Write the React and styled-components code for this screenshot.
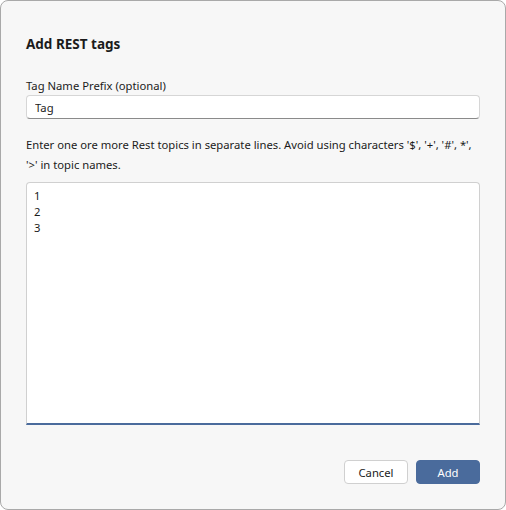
import React, { useState } from "react";
import styled, { createGlobalStyle } from "styled-components";

const GlobalStyle = createGlobalStyle`
    html, body {
        margin: 0;
        padding: 0;
        background: #ffffff;
    }
    * {
        box-sizing: border-box;
    }
`

function App() {
    const [prefix, setPrefix] = useState("Tag");
    const [topics, setTopics] = useState("1\n2\n3");

    return (
        <>
            <GlobalStyle />
            <Dialog>
                <Title>Add REST tags</Title>
                <Field>
                    <Label>Tag Name Prefix (optional)</Label>
                    <Input value={prefix} onChange={(e) => setPrefix(e.target.value)} />
                </Field>
                <Hint>
                    Enter one ore more Rest topics in separate lines. Avoid using characters '$', '+', '#', *', '&gt;' in topic names.
                </Hint>
                <TopicArea value={topics} onChange={(e) => setTopics(e.target.value)} />
                <Footer>
                    <Button>Cancel</Button>
                    <Button primary>Add</Button>
                </Footer>
            </Dialog>
        </>
    )
}

export default App;


const Dialog = styled.div`
    width: 506px;
    height: 510px;
    display: flex;
    flex-direction: column;
    padding: 34px 25px 25px 25px;
    background-color: #f7f7f7;
    border: 1px solid #a9a9a9;
    border-radius: 8px;
    font-family: "Noto Sans", "Open Sans", sans-serif;
    font-size: 11.25px;
    color: #1b1b1b;
`
const Title = styled.h1`
    margin: 0 0 25px 0;
    font-size: 13.5px;
    font-weight: 700;
    line-height: 18px;
    color: #1b1b1b;
`
const Field = styled.div`
    display: flex;
    flex-direction: column;
`
const Label = styled.label`
    line-height: 16px;
    margin-bottom: 1px;
`
const Input = styled.input`
    height: 24px;
    padding: 0 8px;
    border: 1px solid #d6d6d6;
    border-bottom-color: #8a8a8a;
    border-radius: 4px;
    background: #ffffff;
    font-family: inherit;
    font-size: 11.25px;
    color: #1b1b1b;
    outline: none;
`
const Hint = styled.p`
    margin: 16px 0 7px 0;
    line-height: 20px;
`
const TopicArea = styled.textarea`
    height: 243px;
    resize: none;
    padding: 5px 7px;
    border: 1px solid #d0d0d0;
    border-bottom: 2px solid #4a6b9c;
    border-radius: 4px 4px 0 0;
    background: #ffffff;
    font-family: inherit;
    font-size: 11.25px;
    line-height: 16px;
    color: #1b1b1b;
    outline: none;
`
const Footer = styled.div`
    margin-top: auto;
    display: flex;
    justify-content: flex-end;
    gap: 8px;
`
const Button = styled.button`
    width: 64px;
    height: 24px;
    border-radius: 4px;
    border: 1px solid ${(p) => (p.primary ? "#4a6b9c" : "#d0d0d0")};
    background: ${(p) => (p.primary ? "#4a6b9c" : "#ffffff")};
    color: ${(p) => (p.primary ? "#ffffff" : "#1b1b1b")};
    font-family: inherit;
    font-size: 11.25px;
    cursor: pointer;
    padding: 0;
`
